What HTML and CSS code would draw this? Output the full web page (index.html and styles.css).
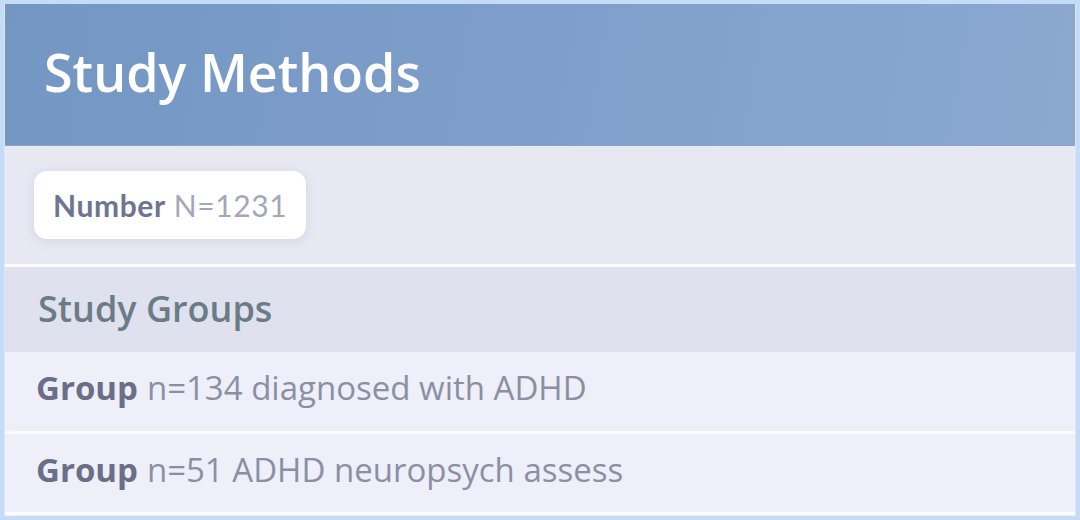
FILE: index.html
```html
<!DOCTYPE html>
<html lang="en">
<head>
<meta charset="utf-8">
<title>Study Methods</title>
<link rel="stylesheet" href="styles.css">
</head>
<body>
<div class="frame">
  <section class="card">
    <header class="card-header">
      <h1 class="title">Study Methods</h1>
    </header>
    <div class="summary">
      <div class="chip"><span class="chip-label">Number</span> <span class="chip-value">N=1231</span></div>
    </div>
    <div class="section-head">
      <h2 class="section-title">Study Groups</h2>
    </div>
    <ul class="groups">
      <li class="group"><span class="group-label">Group</span> <span class="group-text">n=134 diagnosed with ADHD</span></li>
      <li class="group"><span class="group-label">Group</span> <span class="group-text">n=51 ADHD neuropsych assess</span></li>
    </ul>
  </section>
</div>
</body>
</html>
```

FILE: styles.css
```css
* { box-sizing: border-box; }
html, body { margin: 0; padding: 0; }
body {
  width: 1080px;
  height: 520px;
  background: #c5dcf9;
  font-family: "Lato", "Open Sans", sans-serif;
  overflow: hidden;
}
.frame {
  padding: 4px;
  height: 520px;
}
.card {
  height: 512px;
  background: #eeeff8;
  border-left: 1px solid #dfe6f3;
  border-right: 1px solid #dfe6f3;
  display: flex;
  flex-direction: column;
  overflow: hidden;
}
.card-header {
  height: 142px;
  flex-shrink: 0;
  background: linear-gradient(100deg, #7396c3 0%, #7f9fca 50%, #8aa8d0 100%);
  border-bottom: 1px solid #8aa3c8;
  display: flex;
  align-items: center;
  padding-left: 39px;
}
.title {
  margin: 0;
  color: #ffffff;
  font-family: "Open Sans", "Lato", sans-serif;
  font-weight: 600;
  font-size: 52px;
  line-height: 1;
  padding-bottom: 6px;
}
.summary {
  height: 121px;
  flex-shrink: 0;
  background: #e8e8f3;
  padding: 25px 0 0 29px;
  border-bottom: 3px solid #fbfbfe;
}
.chip {
  display: inline-flex;
  align-items: center;
  gap: 8px;
  height: 68px;
  padding: 0 19px;
  background: #ffffff;
  border-radius: 13px;
  box-shadow: 0 2px 10px rgba(150, 155, 190, 0.25);
  font-size: 30px;
  letter-spacing: 0.6px;
}
.chip-label { font-weight: 700; color: #6f7490; }
.chip-value { font-weight: 400; color: #a3a7b8; }
.section-head {
  height: 85px;
  flex-shrink: 0;
  background: #dfe1ee;
  display: flex;
  align-items: center;
  padding-left: 33px;
}
.section-title {
  margin: 0;
  font-family: "Open Sans", "Lato", sans-serif;
  font-weight: 600;
  font-size: 36px;
  color: #6b7c86;
  padding-bottom: 2px;
}
.groups {
  list-style: none;
  margin: 0;
  padding: 0;
  display: flex;
  flex-direction: column;
}
.group {
  height: 82px;
  flex-shrink: 0;
  display: flex;
  align-items: center;
  padding: 0 0 8px 31px;
  gap: 9px;
  border-bottom: 3px solid #fbfbfe;
  font-size: 33px;
  font-family: "Open Sans", "Lato", sans-serif;
}
.group:last-child { height: 81px; }
.group-label { font-weight: 700; color: #6a6e88; }
.group-text { font-weight: 400; color: #8b8fa5; }
```
